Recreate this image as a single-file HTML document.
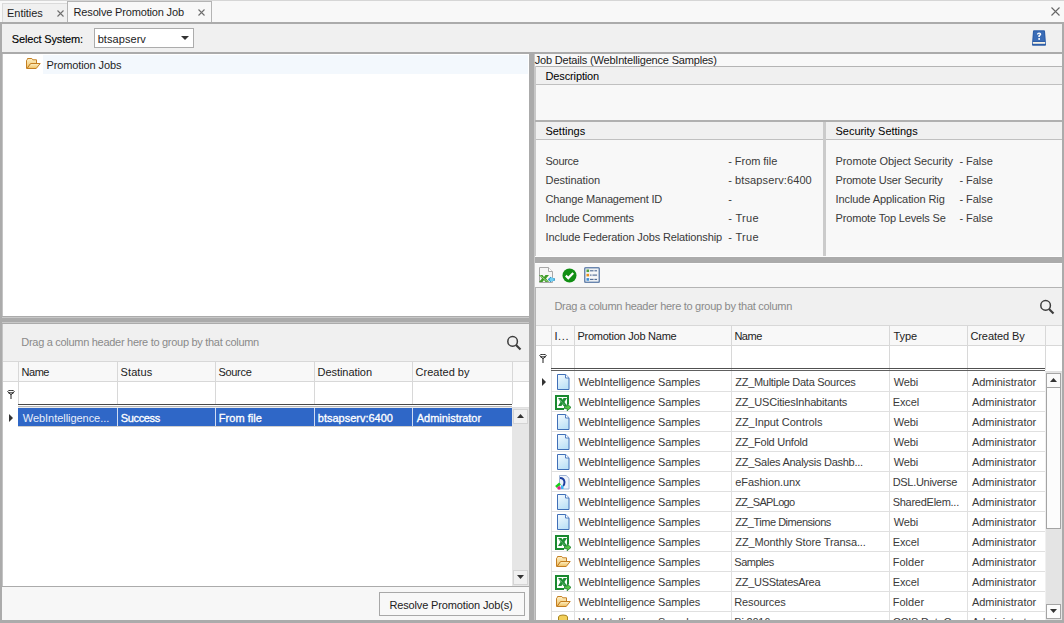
<!DOCTYPE html>
<html><head><meta charset="utf-8">
<style>
*{margin:0;padding:0;box-sizing:border-box}
html,body{width:1064px;height:623px;overflow:hidden;background:#f8f8f8;font-family:"Liberation Sans",sans-serif;font-size:11px;color:#202020;letter-spacing:-0.2px}
.a{position:absolute}
.t{position:absolute;white-space:nowrap;line-height:14px}
</style></head><body>
<div class="a" style="left:0px;top:0px;width:1064px;height:1px;background:#d6d6d6;"></div>
<div class="a" style="left:2px;top:3px;width:66px;height:20px;background:#f0f0f0;border:1px solid #dadada;border-bottom:none"></div>
<div class="t" style="left:7.00px;top:6px;color:#1e1e1e;letter-spacing:-0.029px;">Entities</div>
<div class="a" style="left:67px;top:1px;width:145px;height:22px;background:#f8f8f8;border:1px solid #b4b4b4;border-bottom:none"></div>
<div class="t" style="left:73.60px;top:5px;color:#1e1e1e;letter-spacing:-0.165px;">Resolve Promotion Job</div>
<svg class="a" style="left:57px;top:10px" width="7" height="7"><path d="M0.5 0.5L6.5 6.5M6.5 0.5L0.5 6.5" stroke="#6e6e6e" stroke-width="1.1"/></svg>
<svg class="a" style="left:198px;top:9px" width="7" height="7"><path d="M0.5 0.5L6.5 6.5M6.5 0.5L0.5 6.5" stroke="#6e6e6e" stroke-width="1.1"/></svg>
<svg class="a" style="left:1051px;top:7px" width="9" height="9"><path d="M0.5 0.5L8.5 8.5M8.5 0.5L0.5 8.5" stroke="#666" stroke-width="1.1"/></svg>
<div class="a" style="left:2px;top:24px;width:1060px;height:28px;background:#f0f0f0;"></div>
<div class="a" style="left:2px;top:52px;width:1060px;height:2px;background:#ababab;"></div>
<div class="t" style="left:11.80px;top:32px;color:#000;letter-spacing:-0.162px;-webkit-text-stroke:0.12px #000;">Select System:</div>
<div class="a" style="left:94px;top:28px;width:100px;height:20px;background:#fff;border:1px solid #acacac"></div>
<div class="t" style="left:97.70px;top:32px;color:#222;letter-spacing:0.062px;">btsapserv</div>
<svg class="a" style="left:181px;top:36px" width="8" height="4"><path d="M0 0H8L4 4Z" fill="#333"/></svg>
<svg class="a" style="left:1031px;top:30px" width="16" height="16" viewBox="0 0 16 16">
<path d="M2 1.2Q2 0.2 3 0.2H13Q14 0.2 14 1.2L15 13.5V15Q15 15.8 14 15.8H2Q1 15.8 1 15V13.5Z" fill="#2d5ea8"/>
<path d="M3 1.5H13L13.6 11H2.4Z" fill="#3a6cb6"/>
<rect x="1.8" y="12" width="12.4" height="1.8" fill="#f6f1e4"/>
<path d="M5.8 4.4Q6.1 2.5 8.1 2.5Q10.3 2.5 10.3 4.3Q10.3 5.5 8.9 6.1V7.1H7.3V5.4Q8.7 4.9 8.7 4.3Q8.7 3.7 8.1 3.7Q7.3 3.7 7.2 4.6Z" fill="#fff"/>
<rect x="7.3" y="8.1" width="1.7" height="1.7" fill="#fff"/></svg>
<div class="a" style="left:2px;top:54px;width:527px;height:263px;background:#fff;border-left:1px solid #c4c4c4"></div>
<div class="a" style="left:43px;top:55px;width:485px;height:19px;background:#f3f8fd;"></div>
<svg class="a" style="left:26px;top:58px" width="15" height="12" viewBox="0 0 15 12"><defs><linearGradient id="fg" x1="0" y1="0" x2="0" y2="1"><stop offset="0" stop-color="#fdf1c8"/><stop offset="1" stop-color="#f0c060"/></linearGradient></defs><path d="M0.5 10.5V2.2L1.5 1.2V0.5H5.8L6.8 1.8H10.5V5" fill="url(#fg)" stroke="#c47f22"/><path d="M4.6 5.5H14.2L10.2 10.5H1Z" fill="url(#fg)" stroke="#c47f22"/><path d="M1 10.5L4.6 5.5" stroke="#c47f22" stroke-dasharray="1 1"/></svg>
<div class="t" style="left:46.50px;top:58px;color:#1e1e1e;letter-spacing:-0.115px;">Promotion Jobs</div>
<div class="a" style="left:2px;top:316px;width:527px;height:8px;background:#c8c8c8;"></div>
<div class="a" style="left:2px;top:316px;width:527px;height:1px;background:#ababab;"></div>
<div class="a" style="left:2px;top:318px;width:527px;height:4px;background:#ababab;"></div>
<div class="a" style="left:2px;top:323px;width:527px;height:1px;background:#ababab;"></div>
<div class="a" style="left:529px;top:54px;width:5px;height:566px;background:#ababab;"></div>
<div class="a" style="left:534px;top:54px;width:1px;height:566px;background:#c8c8c8;"></div>
<div class="a" style="left:2px;top:324px;width:527px;height:262px;background:#fff;border-left:1px solid #c4c4c4"></div>
<div class="a" style="left:3px;top:324px;width:526px;height:37px;background:#f0f0f0;"></div>
<div class="t" style="left:21.30px;top:335px;color:#8a8a8a;letter-spacing:-0.292px;">Drag a column header here to group by that column</div>
<svg class="a" style="left:507px;top:335px" width="16" height="16" viewBox="0 0 16 16"><circle cx="5.6" cy="6.4" r="4.8" fill="none" stroke="#3c3c3c" stroke-width="1.5"/><path d="M9 9.9L13.5 14.4" stroke="#3c3c3c" stroke-width="2.1"/></svg>
<div class="a" style="left:3px;top:361px;width:526px;height:1px;background:#d8d8d8;"></div>
<div class="a" style="left:3px;top:362px;width:526px;height:20px;background:#f8f8f8;"></div>
<div class="a" style="left:3px;top:381px;width:526px;height:1px;background:#d8d8d8;"></div>
<svg class="a" style="left:7px;top:390px" width="8" height="9" viewBox="0 0 8 9"><ellipse cx="4" cy="1.6" rx="3.3" ry="1.3" fill="#fff" stroke="#333" stroke-width="1"/><path d="M1 2.4L4 4.6L7 2.4" fill="none" stroke="#333" stroke-width="1"/><path d="M4 4V9" stroke="#333" stroke-width="1.1"/></svg>
<div class="a" style="left:18px;top:362px;width:1px;height:42px;background:#d8d8d8;"></div>
<div class="a" style="left:117px;top:362px;width:1px;height:42px;background:#d8d8d8;"></div>
<div class="a" style="left:215px;top:362px;width:1px;height:42px;background:#d8d8d8;"></div>
<div class="a" style="left:314px;top:362px;width:1px;height:42px;background:#d8d8d8;"></div>
<div class="a" style="left:412px;top:362px;width:1px;height:42px;background:#d8d8d8;"></div>
<div class="a" style="left:512px;top:362px;width:1px;height:42px;background:#d8d8d8;"></div>
<div class="t" style="left:21.50px;top:365px;color:#222;letter-spacing:-0.467px;">Name</div>
<div class="t" style="left:120.50px;top:365px;color:#222;letter-spacing:0.120px;">Status</div>
<div class="t" style="left:218.50px;top:365px;color:#222;letter-spacing:-0.320px;">Source</div>
<div class="t" style="left:317.50px;top:365px;color:#222;letter-spacing:-0.050px;">Destination</div>
<div class="t" style="left:415.50px;top:365px;color:#222;letter-spacing:0.022px;">Created by</div>
<div class="a" style="left:18px;top:404px;width:494px;height:1px;background:#484848;"></div>
<div class="a" style="left:18px;top:405px;width:494px;height:1px;background:#fff;"></div>
<div class="a" style="left:18px;top:406px;width:494px;height:1px;background:#b8b8b8;"></div>
<div class="a" style="left:18px;top:407px;width:494px;height:1px;background:#ececec;"></div>
<div class="a" style="left:18px;top:408px;width:494px;height:18px;background:#2f67c7;"></div>
<div class="a" style="left:18px;top:426px;width:494px;height:1px;background:#cfcfcf;"></div>
<svg class="a" style="left:9px;top:414px" width="5" height="8"><path d="M0 0L4 4L0 8Z" fill="#333"/></svg>
<div class="t" style="left:22.80px;top:411px;color:#e8eef9;letter-spacing:-0.047px;">WebIntelligence...</div>
<div class="a" style="left:117px;top:408px;width:1px;height:18px;background:#d0dcf2;"></div>
<div class="t" style="left:120.80px;top:411px;color:#fff;letter-spacing:-0.367px;-webkit-text-stroke:0.3px #fff;">Success</div>
<div class="a" style="left:215px;top:408px;width:1px;height:18px;background:#d0dcf2;"></div>
<div class="t" style="left:218.80px;top:411px;color:#fff;letter-spacing:0.037px;-webkit-text-stroke:0.3px #fff;">From file</div>
<div class="a" style="left:314px;top:408px;width:1px;height:18px;background:#d0dcf2;"></div>
<div class="t" style="left:317.80px;top:411px;color:#fff;letter-spacing:-0.008px;-webkit-text-stroke:0.3px #fff;">btsapserv:6400</div>
<div class="a" style="left:412px;top:408px;width:1px;height:18px;background:#d0dcf2;"></div>
<div class="t" style="left:416.80px;top:411px;color:#fff;letter-spacing:-0.042px;-webkit-text-stroke:0.3px #fff;">Administrator</div>
<div class="a" style="left:512px;top:407px;width:17px;height:1px;background:#e0e0e0;"></div>
<div class="a" style="left:512px;top:408px;width:17px;height:178px;background:#e6e6e6;"></div>
<div class="a" style="left:513px;top:409px;width:15px;height:15px;background:#f0f0f0;border:1px solid #d4d4d4"></div>
<svg class="a" style="left:517px;top:414px" width="7" height="4"><path d="M0 4H7L3.5 0Z" fill="#333"/></svg>
<div class="a" style="left:513px;top:570px;width:15px;height:15px;background:#f0f0f0;border:1px solid #d4d4d4"></div>
<svg class="a" style="left:517px;top:575px" width="7" height="4"><path d="M0 0H7L3.5 4Z" fill="#333"/></svg>
<div class="a" style="left:2px;top:586px;width:527px;height:1px;background:#ababab;"></div>
<div class="a" style="left:2px;top:587px;width:527px;height:33px;background:#f7f7f7;"></div>
<div class="a" style="left:379px;top:592px;width:146px;height:24px;background:#f8f8f8;border:1px solid #a8a8a8"></div>
<div class="t" style="left:389.40px;top:598px;color:#222;letter-spacing:-0.139px;">Resolve Promotion Job(s)</div>
<div class="t" style="left:534.70px;top:53px;color:#222;letter-spacing:-0.183px;">Job Details (WebIntelligence Samples)</div>
<div class="a" style="left:535px;top:66px;width:527px;height:1px;background:#b4b4b4;"></div>
<div class="a" style="left:535px;top:67px;width:527px;height:17px;background:#f0f0f0;"></div>
<div class="a" style="left:535px;top:84px;width:527px;height:1px;background:#c0c0c0;"></div>
<div class="a" style="left:535px;top:66px;width:1px;height:191px;background:#c8c8c8;"></div>
<div class="t" style="left:545.50px;top:69px;color:#000;letter-spacing:-0.130px;">Description</div>
<div class="a" style="left:535px;top:120px;width:527px;height:2px;background:#b0b0b0;"></div>
<div class="a" style="left:536px;top:122px;width:526px;height:17px;background:#f0f0f0;"></div>
<div class="a" style="left:536px;top:139px;width:526px;height:1px;background:#c0c0c0;"></div>
<div class="a" style="left:823px;top:122px;width:3px;height:135px;background:#cbcbcb;"></div>
<div class="t" style="left:545.40px;top:124px;color:#000;letter-spacing:0.014px;">Settings</div>
<div class="t" style="left:835.50px;top:124px;color:#000;letter-spacing:-0.025px;">Security Settings</div>
<div class="t" style="left:545.60px;top:154px;color:#3a3a3a;letter-spacing:-0.320px;">Source</div>
<div class="t" style="left:728.20px;top:154px;color:#3a3a3a;letter-spacing:-0.040px;">- From file</div>
<div class="t" style="left:545.60px;top:173px;color:#3a3a3a;letter-spacing:-0.050px;">Destination</div>
<div class="t" style="left:728.20px;top:173px;color:#3a3a3a;letter-spacing:0.107px;">- btsapserv:6400</div>
<div class="t" style="left:545.60px;top:192px;color:#3a3a3a;letter-spacing:-0.168px;">Change Management ID</div>
<div class="t" style="left:728.20px;top:192px;color:#3a3a3a;letter-spacing:-0.105px;">-</div>
<div class="t" style="left:545.60px;top:211px;color:#3a3a3a;letter-spacing:-0.227px;">Include Comments</div>
<div class="t" style="left:728.20px;top:211px;color:#3a3a3a;letter-spacing:0.340px;">- True</div>
<div class="t" style="left:545.60px;top:230px;color:#3a3a3a;letter-spacing:-0.129px;">Include Federation Jobs Relationship</div>
<div class="t" style="left:728.20px;top:230px;color:#3a3a3a;letter-spacing:0.340px;">- True</div>
<div class="t" style="left:835.50px;top:154px;color:#3a3a3a;letter-spacing:-0.077px;">Promote Object Security</div>
<div class="t" style="left:959.50px;top:154px;color:#3a3a3a;letter-spacing:-0.050px;">- False</div>
<div class="t" style="left:835.50px;top:173px;color:#3a3a3a;letter-spacing:-0.175px;">Promote User Security</div>
<div class="t" style="left:959.50px;top:173px;color:#3a3a3a;letter-spacing:-0.050px;">- False</div>
<div class="t" style="left:835.50px;top:192px;color:#3a3a3a;letter-spacing:-0.091px;">Include Application Rig</div>
<div class="t" style="left:959.50px;top:192px;color:#3a3a3a;letter-spacing:-0.050px;">- False</div>
<div class="t" style="left:835.50px;top:211px;color:#3a3a3a;letter-spacing:-0.160px;">Promote Top Levels Se</div>
<div class="t" style="left:959.50px;top:211px;color:#3a3a3a;letter-spacing:-0.050px;">- False</div>
<div class="a" style="left:535px;top:256px;width:527px;height:1px;background:#fdfdfd;"></div>
<div class="a" style="left:535px;top:257px;width:527px;height:6px;background:#ababab;"></div>
<div class="a" style="left:535px;top:263px;width:527px;height:1px;background:#fdfdfd;"></div>
<svg class="a" style="left:539px;top:267px" width="16" height="16" viewBox="0 0 16 16"><path d="M0.5 0.5H9.5L13.5 4.5V15.5H0.5Z" fill="#f6f6f6" stroke="#a8a8a8"/><path d="M9.5 0.5V4.5H13.5" fill="#fff" stroke="#a8a8a8"/><path d="M0 8H3.5L5 10L6.5 8H10L7 11.5L10 15H6.5L5 13L3.5 15H0L3 11.5Z" fill="#3e9a26"/><path d="M1 8.5L8.5 14.5" stroke="#b8e6a0" stroke-width="0.8"/><path d="M9 12.5L12 10V11.5H15.5V13.5H12V15Z" fill="#27a3dc" stroke="#1d7fb8" stroke-width="0.6"/><circle cx="12.8" cy="12.5" r="2" fill="#6fd0f4"/></svg>
<svg class="a" style="left:562px;top:268px" width="15" height="15" viewBox="0 0 15 15"><circle cx="7.5" cy="7.5" r="7" fill="#118f14"/><path d="M3.8 7.6L6.3 10.1L11.2 5.1" stroke="#fff" stroke-width="2.2" fill="none"/></svg>
<svg class="a" style="left:584px;top:267px" width="17" height="16" viewBox="0 0 17 16"><rect x="0.75" y="0.75" width="14.5" height="14.5" rx="0.8" fill="#fff" stroke="#6a86ae" stroke-width="1.5"/><rect x="2" y="2" width="12" height="3.5" fill="#eef1f4"/><rect x="2" y="6.3" width="12" height="3.5" fill="#eef1f4"/><rect x="2" y="10.6" width="12" height="3.5" fill="#eef1f4"/><rect x="2.5" y="2.5" width="2.6" height="2.6" fill="#4ea33c"/><rect x="2.5" y="6.8" width="2.6" height="2.6" fill="#e8921a"/><rect x="2.5" y="11.1" width="2.6" height="2.6" fill="#3a8ed8"/><path d="M6 3.8H9.5M10.5 3.8H13M6 8.1H7.5M8.5 8.1H13M6 12.4H9.5M10.5 12.4H13" stroke="#2e4f80" stroke-width="0.9"/></svg>
<div class="a" style="left:535px;top:287px;width:527px;height:333px;background:#fff;border-top:1px solid #b4b4b4;border-left:1px solid #b4b4b4"></div>
<div class="a" style="left:536px;top:288px;width:526px;height:37px;background:#f0f0f0;"></div>
<div class="t" style="left:554.40px;top:299px;color:#8a8a8a;letter-spacing:-0.292px;">Drag a column header here to group by that column</div>
<svg class="a" style="left:1040px;top:299px" width="16" height="16" viewBox="0 0 16 16"><circle cx="5.6" cy="6.4" r="4.8" fill="none" stroke="#3c3c3c" stroke-width="1.5"/><path d="M9 9.9L13.5 14.4" stroke="#3c3c3c" stroke-width="2.1"/></svg>
<div class="a" style="left:536px;top:325px;width:526px;height:1px;background:#d8d8d8;"></div>
<div class="a" style="left:536px;top:326px;width:526px;height:20px;background:#f8f8f8;"></div>
<div class="a" style="left:536px;top:345px;width:526px;height:1px;background:#d8d8d8;"></div>
<svg class="a" style="left:539px;top:354px" width="8" height="9" viewBox="0 0 8 9"><ellipse cx="4" cy="1.6" rx="3.3" ry="1.3" fill="#fff" stroke="#333" stroke-width="1"/><path d="M1 2.4L4 4.6L7 2.4" fill="none" stroke="#333" stroke-width="1"/><path d="M4 4V9" stroke="#333" stroke-width="1.1"/></svg>
<div class="a" style="left:551px;top:326px;width:1px;height:44px;background:#d8d8d8;"></div>
<div class="a" style="left:574px;top:326px;width:1px;height:44px;background:#d8d8d8;"></div>
<div class="a" style="left:731px;top:326px;width:1px;height:44px;background:#d8d8d8;"></div>
<div class="a" style="left:889px;top:326px;width:1px;height:44px;background:#d8d8d8;"></div>
<div class="a" style="left:967px;top:326px;width:1px;height:44px;background:#d8d8d8;"></div>
<div class="a" style="left:1045px;top:326px;width:1px;height:44px;background:#d8d8d8;"></div>
<div class="t" style="left:554.40px;top:329px;color:#222;letter-spacing:0.667px;">I...</div>
<div class="t" style="left:577.40px;top:329px;color:#222;letter-spacing:-0.235px;">Promotion Job Name</div>
<div class="t" style="left:734.40px;top:329px;color:#222;letter-spacing:-0.467px;">Name</div>
<div class="t" style="left:893.40px;top:329px;color:#222;letter-spacing:-0.033px;">Type</div>
<div class="t" style="left:970.40px;top:329px;color:#222;letter-spacing:-0.078px;">Created By</div>
<div class="a" style="left:551px;top:368px;width:494px;height:1px;background:#505050;"></div>
<div class="a" style="left:551px;top:370px;width:494px;height:1px;background:#606060;"></div>
<div class="a" style="left:551px;top:391px;width:494px;height:1px;background:#e0e0e0;"></div>
<div class="a" style="left:551px;top:371px;width:1px;height:20px;background:#e0e0e0;"></div>
<div class="a" style="left:574px;top:371px;width:1px;height:20px;background:#e0e0e0;"></div>
<div class="a" style="left:731px;top:371px;width:1px;height:20px;background:#e0e0e0;"></div>
<div class="a" style="left:889px;top:371px;width:1px;height:20px;background:#e0e0e0;"></div>
<div class="a" style="left:967px;top:371px;width:1px;height:20px;background:#e0e0e0;"></div>
<div class="a" style="left:1045px;top:371px;width:1px;height:20px;background:#e0e0e0;"></div>
<svg class="a" style="left:557px;top:374px" width="14" height="16" viewBox="0 0 14 16"><defs><linearGradient id="dg" x1="0" y1="0" x2="0.4" y2="1"><stop offset="0" stop-color="#f4fafe"/><stop offset="1" stop-color="#bfe2f7"/></linearGradient></defs><path d="M0.5 0.5H8.7L12 3.8V15.5H0.5Z" fill="url(#dg)" stroke="#3f6fb8"/><path d="M8.5 0.5V4H12" fill="#fff" stroke="#3f6fb8" stroke-width="0.9"/></svg>
<div class="t" style="left:578.50px;top:375px;color:#3a3a3a;letter-spacing:-0.100px;">WebIntelligence Samples</div>
<div class="t" style="left:735.30px;top:375px;color:#3a3a3a;letter-spacing:-0.287px;">ZZ_Multiple Data Sources</div>
<div class="t" style="left:893.70px;top:375px;color:#3a3a3a;letter-spacing:-0.100px;">Webi</div>
<div class="t" style="left:971.90px;top:375px;color:#3a3a3a;letter-spacing:-0.042px;">Administrator</div>
<div class="a" style="left:551px;top:411px;width:494px;height:1px;background:#e0e0e0;"></div>
<div class="a" style="left:551px;top:391px;width:1px;height:20px;background:#e0e0e0;"></div>
<div class="a" style="left:574px;top:391px;width:1px;height:20px;background:#e0e0e0;"></div>
<div class="a" style="left:731px;top:391px;width:1px;height:20px;background:#e0e0e0;"></div>
<div class="a" style="left:889px;top:391px;width:1px;height:20px;background:#e0e0e0;"></div>
<div class="a" style="left:967px;top:391px;width:1px;height:20px;background:#e0e0e0;"></div>
<div class="a" style="left:1045px;top:391px;width:1px;height:20px;background:#e0e0e0;"></div>
<svg class="a" style="left:555px;top:395px" width="17" height="16" viewBox="0 0 17 16"><path d="M13 9.5V1H1V14H9" fill="#fff" stroke="#1a8a30" stroke-width="2"/><path d="M3 3H6.5L7.5 4.8L8.5 3H12L9.5 7L12 11H8.5L7.5 9.2L6.5 11H3L5.5 7Z" fill="#1f8f34"/><path d="M3.8 3.8L9.5 10" stroke="#e8f6ea" stroke-width="0.7" stroke-dasharray="0.9 0.9"/><path d="M9.5 11.2H12.2V9L16 12.4L12.2 15.8V13.6H9.5Z" fill="#54c444" stroke="#167a26" stroke-width="0.8"/></svg>
<div class="t" style="left:578.50px;top:395px;color:#3a3a3a;letter-spacing:-0.100px;">WebIntelligence Samples</div>
<div class="t" style="left:735.30px;top:395px;color:#3a3a3a;letter-spacing:-0.195px;">ZZ_USCitiesInhabitants</div>
<div class="t" style="left:892.70px;top:395px;color:#3a3a3a;letter-spacing:-0.100px;">Excel</div>
<div class="t" style="left:971.90px;top:395px;color:#3a3a3a;letter-spacing:-0.042px;">Administrator</div>
<div class="a" style="left:551px;top:431px;width:494px;height:1px;background:#e0e0e0;"></div>
<div class="a" style="left:551px;top:411px;width:1px;height:20px;background:#e0e0e0;"></div>
<div class="a" style="left:574px;top:411px;width:1px;height:20px;background:#e0e0e0;"></div>
<div class="a" style="left:731px;top:411px;width:1px;height:20px;background:#e0e0e0;"></div>
<div class="a" style="left:889px;top:411px;width:1px;height:20px;background:#e0e0e0;"></div>
<div class="a" style="left:967px;top:411px;width:1px;height:20px;background:#e0e0e0;"></div>
<div class="a" style="left:1045px;top:411px;width:1px;height:20px;background:#e0e0e0;"></div>
<svg class="a" style="left:557px;top:414px" width="14" height="16" viewBox="0 0 14 16"><defs><linearGradient id="dg" x1="0" y1="0" x2="0.4" y2="1"><stop offset="0" stop-color="#f4fafe"/><stop offset="1" stop-color="#bfe2f7"/></linearGradient></defs><path d="M0.5 0.5H8.7L12 3.8V15.5H0.5Z" fill="url(#dg)" stroke="#3f6fb8"/><path d="M8.5 0.5V4H12" fill="#fff" stroke="#3f6fb8" stroke-width="0.9"/></svg>
<div class="t" style="left:578.50px;top:415px;color:#3a3a3a;letter-spacing:-0.100px;">WebIntelligence Samples</div>
<div class="t" style="left:735.30px;top:415px;color:#3a3a3a;letter-spacing:-0.056px;">ZZ_Input Controls</div>
<div class="t" style="left:893.70px;top:415px;color:#3a3a3a;letter-spacing:-0.100px;">Webi</div>
<div class="t" style="left:971.90px;top:415px;color:#3a3a3a;letter-spacing:-0.042px;">Administrator</div>
<div class="a" style="left:551px;top:451px;width:494px;height:1px;background:#e0e0e0;"></div>
<div class="a" style="left:551px;top:431px;width:1px;height:20px;background:#e0e0e0;"></div>
<div class="a" style="left:574px;top:431px;width:1px;height:20px;background:#e0e0e0;"></div>
<div class="a" style="left:731px;top:431px;width:1px;height:20px;background:#e0e0e0;"></div>
<div class="a" style="left:889px;top:431px;width:1px;height:20px;background:#e0e0e0;"></div>
<div class="a" style="left:967px;top:431px;width:1px;height:20px;background:#e0e0e0;"></div>
<div class="a" style="left:1045px;top:431px;width:1px;height:20px;background:#e0e0e0;"></div>
<svg class="a" style="left:557px;top:434px" width="14" height="16" viewBox="0 0 14 16"><defs><linearGradient id="dg" x1="0" y1="0" x2="0.4" y2="1"><stop offset="0" stop-color="#f4fafe"/><stop offset="1" stop-color="#bfe2f7"/></linearGradient></defs><path d="M0.5 0.5H8.7L12 3.8V15.5H0.5Z" fill="url(#dg)" stroke="#3f6fb8"/><path d="M8.5 0.5V4H12" fill="#fff" stroke="#3f6fb8" stroke-width="0.9"/></svg>
<div class="t" style="left:578.50px;top:435px;color:#3a3a3a;letter-spacing:-0.100px;">WebIntelligence Samples</div>
<div class="t" style="left:735.30px;top:435px;color:#3a3a3a;letter-spacing:-0.254px;">ZZ_Fold Unfold</div>
<div class="t" style="left:893.70px;top:435px;color:#3a3a3a;letter-spacing:-0.100px;">Webi</div>
<div class="t" style="left:971.90px;top:435px;color:#3a3a3a;letter-spacing:-0.042px;">Administrator</div>
<div class="a" style="left:551px;top:471px;width:494px;height:1px;background:#e0e0e0;"></div>
<div class="a" style="left:551px;top:451px;width:1px;height:20px;background:#e0e0e0;"></div>
<div class="a" style="left:574px;top:451px;width:1px;height:20px;background:#e0e0e0;"></div>
<div class="a" style="left:731px;top:451px;width:1px;height:20px;background:#e0e0e0;"></div>
<div class="a" style="left:889px;top:451px;width:1px;height:20px;background:#e0e0e0;"></div>
<div class="a" style="left:967px;top:451px;width:1px;height:20px;background:#e0e0e0;"></div>
<div class="a" style="left:1045px;top:451px;width:1px;height:20px;background:#e0e0e0;"></div>
<svg class="a" style="left:557px;top:454px" width="14" height="16" viewBox="0 0 14 16"><defs><linearGradient id="dg" x1="0" y1="0" x2="0.4" y2="1"><stop offset="0" stop-color="#f4fafe"/><stop offset="1" stop-color="#bfe2f7"/></linearGradient></defs><path d="M0.5 0.5H8.7L12 3.8V15.5H0.5Z" fill="url(#dg)" stroke="#3f6fb8"/><path d="M8.5 0.5V4H12" fill="#fff" stroke="#3f6fb8" stroke-width="0.9"/></svg>
<div class="t" style="left:578.50px;top:455px;color:#3a3a3a;letter-spacing:-0.100px;">WebIntelligence Samples</div>
<div class="t" style="left:735.30px;top:455px;color:#3a3a3a;letter-spacing:-0.268px;">ZZ_Sales Analysis Dashb...</div>
<div class="t" style="left:893.70px;top:455px;color:#3a3a3a;letter-spacing:-0.100px;">Webi</div>
<div class="t" style="left:971.90px;top:455px;color:#3a3a3a;letter-spacing:-0.042px;">Administrator</div>
<div class="a" style="left:551px;top:491px;width:494px;height:1px;background:#e0e0e0;"></div>
<div class="a" style="left:551px;top:471px;width:1px;height:20px;background:#e0e0e0;"></div>
<div class="a" style="left:574px;top:471px;width:1px;height:20px;background:#e0e0e0;"></div>
<div class="a" style="left:731px;top:471px;width:1px;height:20px;background:#e0e0e0;"></div>
<div class="a" style="left:889px;top:471px;width:1px;height:20px;background:#e0e0e0;"></div>
<div class="a" style="left:967px;top:471px;width:1px;height:20px;background:#e0e0e0;"></div>
<div class="a" style="left:1045px;top:471px;width:1px;height:20px;background:#e0e0e0;"></div>
<svg class="a" style="left:554px;top:474px" width="16" height="16" viewBox="0 0 16 16"><path d="M5.5 1.5H12.2L15 4.3V15H5.5Z" fill="#eef3fa" stroke="#9db3d6"/><path d="M6 4Q10 4 10.5 8Q10.5 11 9 12" fill="none" stroke="#1c3f9e" stroke-width="2"/><path d="M2 13L6 9.5" stroke="#18d018" stroke-width="2.6"/><circle cx="5" cy="14" r="1.8" fill="#e0208a"/><path d="M7 11L9.5 12.5V15H7Z" fill="#3ab8f0"/></svg>
<div class="t" style="left:578.50px;top:475px;color:#3a3a3a;letter-spacing:-0.100px;">WebIntelligence Samples</div>
<div class="t" style="left:735.30px;top:475px;color:#3a3a3a;letter-spacing:-0.073px;">eFashion.unx</div>
<div class="t" style="left:892.70px;top:475px;color:#3a3a3a;letter-spacing:-0.300px;">DSL.Universe</div>
<div class="t" style="left:971.90px;top:475px;color:#3a3a3a;letter-spacing:-0.042px;">Administrator</div>
<div class="a" style="left:551px;top:511px;width:494px;height:1px;background:#e0e0e0;"></div>
<div class="a" style="left:551px;top:491px;width:1px;height:20px;background:#e0e0e0;"></div>
<div class="a" style="left:574px;top:491px;width:1px;height:20px;background:#e0e0e0;"></div>
<div class="a" style="left:731px;top:491px;width:1px;height:20px;background:#e0e0e0;"></div>
<div class="a" style="left:889px;top:491px;width:1px;height:20px;background:#e0e0e0;"></div>
<div class="a" style="left:967px;top:491px;width:1px;height:20px;background:#e0e0e0;"></div>
<div class="a" style="left:1045px;top:491px;width:1px;height:20px;background:#e0e0e0;"></div>
<svg class="a" style="left:557px;top:494px" width="14" height="16" viewBox="0 0 14 16"><defs><linearGradient id="dg" x1="0" y1="0" x2="0.4" y2="1"><stop offset="0" stop-color="#f4fafe"/><stop offset="1" stop-color="#bfe2f7"/></linearGradient></defs><path d="M0.5 0.5H8.7L12 3.8V15.5H0.5Z" fill="url(#dg)" stroke="#3f6fb8"/><path d="M8.5 0.5V4H12" fill="#fff" stroke="#3f6fb8" stroke-width="0.9"/></svg>
<div class="t" style="left:578.50px;top:495px;color:#3a3a3a;letter-spacing:-0.100px;">WebIntelligence Samples</div>
<div class="t" style="left:735.30px;top:495px;color:#3a3a3a;letter-spacing:-0.689px;">ZZ_SAPLogo</div>
<div class="t" style="left:892.70px;top:495px;color:#3a3a3a;letter-spacing:-0.267px;">SharedElem...</div>
<div class="t" style="left:971.90px;top:495px;color:#3a3a3a;letter-spacing:-0.042px;">Administrator</div>
<div class="a" style="left:551px;top:531px;width:494px;height:1px;background:#e0e0e0;"></div>
<div class="a" style="left:551px;top:511px;width:1px;height:20px;background:#e0e0e0;"></div>
<div class="a" style="left:574px;top:511px;width:1px;height:20px;background:#e0e0e0;"></div>
<div class="a" style="left:731px;top:511px;width:1px;height:20px;background:#e0e0e0;"></div>
<div class="a" style="left:889px;top:511px;width:1px;height:20px;background:#e0e0e0;"></div>
<div class="a" style="left:967px;top:511px;width:1px;height:20px;background:#e0e0e0;"></div>
<div class="a" style="left:1045px;top:511px;width:1px;height:20px;background:#e0e0e0;"></div>
<svg class="a" style="left:557px;top:514px" width="14" height="16" viewBox="0 0 14 16"><defs><linearGradient id="dg" x1="0" y1="0" x2="0.4" y2="1"><stop offset="0" stop-color="#f4fafe"/><stop offset="1" stop-color="#bfe2f7"/></linearGradient></defs><path d="M0.5 0.5H8.7L12 3.8V15.5H0.5Z" fill="url(#dg)" stroke="#3f6fb8"/><path d="M8.5 0.5V4H12" fill="#fff" stroke="#3f6fb8" stroke-width="0.9"/></svg>
<div class="t" style="left:578.50px;top:515px;color:#3a3a3a;letter-spacing:-0.100px;">WebIntelligence Samples</div>
<div class="t" style="left:735.30px;top:515px;color:#3a3a3a;letter-spacing:-0.476px;">ZZ_Time Dimensions</div>
<div class="t" style="left:893.70px;top:515px;color:#3a3a3a;letter-spacing:-0.100px;">Webi</div>
<div class="t" style="left:971.90px;top:515px;color:#3a3a3a;letter-spacing:-0.042px;">Administrator</div>
<div class="a" style="left:551px;top:551px;width:494px;height:1px;background:#e0e0e0;"></div>
<div class="a" style="left:551px;top:531px;width:1px;height:20px;background:#e0e0e0;"></div>
<div class="a" style="left:574px;top:531px;width:1px;height:20px;background:#e0e0e0;"></div>
<div class="a" style="left:731px;top:531px;width:1px;height:20px;background:#e0e0e0;"></div>
<div class="a" style="left:889px;top:531px;width:1px;height:20px;background:#e0e0e0;"></div>
<div class="a" style="left:967px;top:531px;width:1px;height:20px;background:#e0e0e0;"></div>
<div class="a" style="left:1045px;top:531px;width:1px;height:20px;background:#e0e0e0;"></div>
<svg class="a" style="left:555px;top:535px" width="17" height="16" viewBox="0 0 17 16"><path d="M13 9.5V1H1V14H9" fill="#fff" stroke="#1a8a30" stroke-width="2"/><path d="M3 3H6.5L7.5 4.8L8.5 3H12L9.5 7L12 11H8.5L7.5 9.2L6.5 11H3L5.5 7Z" fill="#1f8f34"/><path d="M3.8 3.8L9.5 10" stroke="#e8f6ea" stroke-width="0.7" stroke-dasharray="0.9 0.9"/><path d="M9.5 11.2H12.2V9L16 12.4L12.2 15.8V13.6H9.5Z" fill="#54c444" stroke="#167a26" stroke-width="0.8"/></svg>
<div class="t" style="left:578.50px;top:535px;color:#3a3a3a;letter-spacing:-0.100px;">WebIntelligence Samples</div>
<div class="t" style="left:735.30px;top:535px;color:#3a3a3a;letter-spacing:-0.108px;">ZZ_Monthly Store Transa...</div>
<div class="t" style="left:892.70px;top:535px;color:#3a3a3a;letter-spacing:-0.100px;">Excel</div>
<div class="t" style="left:971.90px;top:535px;color:#3a3a3a;letter-spacing:-0.042px;">Administrator</div>
<div class="a" style="left:551px;top:571px;width:494px;height:1px;background:#e0e0e0;"></div>
<div class="a" style="left:551px;top:551px;width:1px;height:20px;background:#e0e0e0;"></div>
<div class="a" style="left:574px;top:551px;width:1px;height:20px;background:#e0e0e0;"></div>
<div class="a" style="left:731px;top:551px;width:1px;height:20px;background:#e0e0e0;"></div>
<div class="a" style="left:889px;top:551px;width:1px;height:20px;background:#e0e0e0;"></div>
<div class="a" style="left:967px;top:551px;width:1px;height:20px;background:#e0e0e0;"></div>
<div class="a" style="left:1045px;top:551px;width:1px;height:20px;background:#e0e0e0;"></div>
<svg class="a" style="left:556px;top:556px" width="15" height="12" viewBox="0 0 15 12"><defs><linearGradient id="fg" x1="0" y1="0" x2="0" y2="1"><stop offset="0" stop-color="#fdf1c8"/><stop offset="1" stop-color="#f0c060"/></linearGradient></defs><path d="M0.5 10.5V2.2L1.5 1.2V0.5H5.8L6.8 1.8H10.5V5" fill="url(#fg)" stroke="#c47f22"/><path d="M4.6 5.5H14.2L10.2 10.5H1Z" fill="url(#fg)" stroke="#c47f22"/><path d="M1 10.5L4.6 5.5" stroke="#c47f22" stroke-dasharray="1 1"/></svg>
<div class="t" style="left:578.50px;top:555px;color:#3a3a3a;letter-spacing:-0.100px;">WebIntelligence Samples</div>
<div class="t" style="left:734.30px;top:555px;color:#3a3a3a;letter-spacing:-0.483px;">Samples</div>
<div class="t" style="left:892.70px;top:555px;color:#3a3a3a;letter-spacing:0.040px;">Folder</div>
<div class="t" style="left:971.90px;top:555px;color:#3a3a3a;letter-spacing:-0.042px;">Administrator</div>
<div class="a" style="left:551px;top:591px;width:494px;height:1px;background:#e0e0e0;"></div>
<div class="a" style="left:551px;top:571px;width:1px;height:20px;background:#e0e0e0;"></div>
<div class="a" style="left:574px;top:571px;width:1px;height:20px;background:#e0e0e0;"></div>
<div class="a" style="left:731px;top:571px;width:1px;height:20px;background:#e0e0e0;"></div>
<div class="a" style="left:889px;top:571px;width:1px;height:20px;background:#e0e0e0;"></div>
<div class="a" style="left:967px;top:571px;width:1px;height:20px;background:#e0e0e0;"></div>
<div class="a" style="left:1045px;top:571px;width:1px;height:20px;background:#e0e0e0;"></div>
<svg class="a" style="left:555px;top:575px" width="17" height="16" viewBox="0 0 17 16"><path d="M13 9.5V1H1V14H9" fill="#fff" stroke="#1a8a30" stroke-width="2"/><path d="M3 3H6.5L7.5 4.8L8.5 3H12L9.5 7L12 11H8.5L7.5 9.2L6.5 11H3L5.5 7Z" fill="#1f8f34"/><path d="M3.8 3.8L9.5 10" stroke="#e8f6ea" stroke-width="0.7" stroke-dasharray="0.9 0.9"/><path d="M9.5 11.2H12.2V9L16 12.4L12.2 15.8V13.6H9.5Z" fill="#54c444" stroke="#167a26" stroke-width="0.8"/></svg>
<div class="t" style="left:578.50px;top:575px;color:#3a3a3a;letter-spacing:-0.100px;">WebIntelligence Samples</div>
<div class="t" style="left:735.30px;top:575px;color:#3a3a3a;letter-spacing:-0.286px;">ZZ_USStatesArea</div>
<div class="t" style="left:892.70px;top:575px;color:#3a3a3a;letter-spacing:-0.100px;">Excel</div>
<div class="t" style="left:971.90px;top:575px;color:#3a3a3a;letter-spacing:-0.042px;">Administrator</div>
<div class="a" style="left:551px;top:611px;width:494px;height:1px;background:#e0e0e0;"></div>
<div class="a" style="left:551px;top:591px;width:1px;height:20px;background:#e0e0e0;"></div>
<div class="a" style="left:574px;top:591px;width:1px;height:20px;background:#e0e0e0;"></div>
<div class="a" style="left:731px;top:591px;width:1px;height:20px;background:#e0e0e0;"></div>
<div class="a" style="left:889px;top:591px;width:1px;height:20px;background:#e0e0e0;"></div>
<div class="a" style="left:967px;top:591px;width:1px;height:20px;background:#e0e0e0;"></div>
<div class="a" style="left:1045px;top:591px;width:1px;height:20px;background:#e0e0e0;"></div>
<svg class="a" style="left:556px;top:596px" width="15" height="12" viewBox="0 0 15 12"><defs><linearGradient id="fg" x1="0" y1="0" x2="0" y2="1"><stop offset="0" stop-color="#fdf1c8"/><stop offset="1" stop-color="#f0c060"/></linearGradient></defs><path d="M0.5 10.5V2.2L1.5 1.2V0.5H5.8L6.8 1.8H10.5V5" fill="url(#fg)" stroke="#c47f22"/><path d="M4.6 5.5H14.2L10.2 10.5H1Z" fill="url(#fg)" stroke="#c47f22"/><path d="M1 10.5L4.6 5.5" stroke="#c47f22" stroke-dasharray="1 1"/></svg>
<div class="t" style="left:578.50px;top:595px;color:#3a3a3a;letter-spacing:-0.100px;">WebIntelligence Samples</div>
<div class="t" style="left:734.30px;top:595px;color:#3a3a3a;letter-spacing:-0.150px;">Resources</div>
<div class="t" style="left:892.70px;top:595px;color:#3a3a3a;letter-spacing:0.040px;">Folder</div>
<div class="t" style="left:971.90px;top:595px;color:#3a3a3a;letter-spacing:-0.042px;">Administrator</div>
<div class="a" style="left:551px;top:631px;width:494px;height:1px;background:#e0e0e0;"></div>
<div class="a" style="left:551px;top:611px;width:1px;height:20px;background:#e0e0e0;"></div>
<div class="a" style="left:574px;top:611px;width:1px;height:20px;background:#e0e0e0;"></div>
<div class="a" style="left:731px;top:611px;width:1px;height:20px;background:#e0e0e0;"></div>
<div class="a" style="left:889px;top:611px;width:1px;height:20px;background:#e0e0e0;"></div>
<div class="a" style="left:967px;top:611px;width:1px;height:20px;background:#e0e0e0;"></div>
<div class="a" style="left:1045px;top:611px;width:1px;height:20px;background:#e0e0e0;"></div>
<svg class="a" style="left:557px;top:614px" width="16" height="16" viewBox="0 0 16 16"><ellipse cx="6" cy="3" rx="4.5" ry="2" fill="#f2cf5a" stroke="#a88420"/><path d="M1.5 3V10Q1.5 12 6 12Q10.5 12 10.5 10V3" fill="#f2cf5a" stroke="#a88420"/><path d="M9 9L14 14" stroke="#3a9a3a" stroke-width="2"/></svg>
<div class="t" style="left:578.50px;top:615px;color:#3a3a3a;letter-spacing:-0.100px;">WebIntelligence Samples</div>
<div class="t" style="left:734.30px;top:615px;color:#3a3a3a;letter-spacing:-0.210px;">Bi 2016</div>
<div class="t" style="left:892.70px;top:615px;color:#3a3a3a;letter-spacing:-0.199px;">CCIS.DataCo...</div>
<div class="t" style="left:971.90px;top:615px;color:#3a3a3a;letter-spacing:-0.042px;">Administrator</div>
<svg class="a" style="left:542px;top:378px" width="5" height="8"><path d="M0 0L4 4L0 8Z" fill="#333"/></svg>
<div class="a" style="left:1045px;top:371px;width:17px;height:249px;background:#e4e4e4;"></div>
<div class="a" style="left:1045px;top:371px;width:17px;height:1px;background:#e0e0e0;"></div>
<div class="a" style="left:1045px;top:372px;width:1px;height:248px;background:#f0f0f0;"></div>
<div class="a" style="left:1046px;top:373px;width:15px;height:15px;background:#fafafa;border:1px solid #a4a4a4"></div>
<svg class="a" style="left:1050px;top:378px" width="7" height="4"><path d="M0 4H7L3.5 0Z" fill="#333"/></svg>
<div class="a" style="left:1046px;top:387px;width:15px;height:142px;background:#fcfcfc;border:1px solid #a4a4a4"></div>
<div class="a" style="left:1046px;top:604px;width:15px;height:15px;background:#fcfcfc;border:1px solid #a4a4a4"></div>
<svg class="a" style="left:1050px;top:609px" width="7" height="4"><path d="M0 0H7L3.5 4Z" fill="#333"/></svg>
<div class="a" style="left:0px;top:22px;width:1064px;height:2px;background:#ababab;"></div>
<div class="a" style="left:0px;top:22px;width:2px;height:601px;background:#ababab;"></div>
<div class="a" style="left:1062px;top:22px;width:2px;height:601px;background:#ababab;"></div>
<div class="a" style="left:0px;top:620px;width:1064px;height:3px;background:#ababab;"></div>
</body></html>
